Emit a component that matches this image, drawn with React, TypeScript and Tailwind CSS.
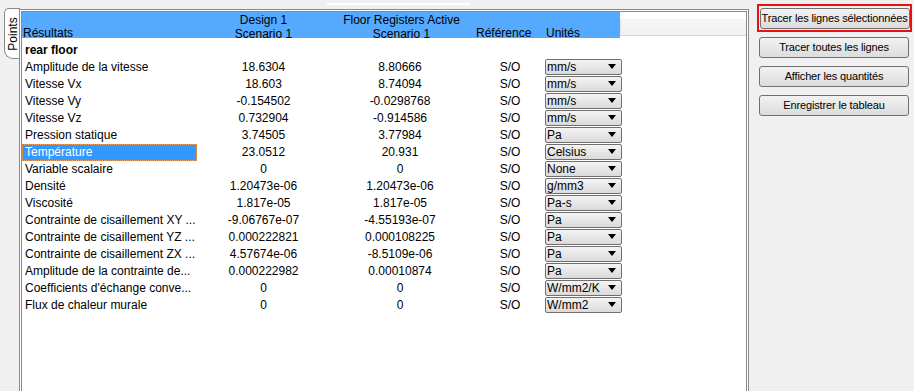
import React from "react";

const rows: [string, string, string, string][] = [
  ["Amplitude de la vitesse", "18.6304", "8.80666", "mm/s"],
  ["Vitesse Vx", "18.603", "8.74094", "mm/s"],
  ["Vitesse Vy", "-0.154502", "-0.0298768", "mm/s"],
  ["Vitesse Vz", "0.732904", "-0.914586", "mm/s"],
  ["Pression statique", "3.74505", "3.77984", "Pa"],
  ["Température", "23.0512", "20.931", "Celsius"],
  ["Variable scalaire", "0", "0", "None"],
  ["Densité", "1.20473e-06", "1.20473e-06", "g/mm3"],
  ["Viscosité", "1.817e-05", "1.817e-05", "Pa-s"],
  ["Contrainte de cisaillement XY ...", "-9.06767e-07", "-4.55193e-07", "Pa"],
  ["Contrainte de cisaillement YZ ...", "0.000222821", "0.000108225", "Pa"],
  ["Contrainte de cisaillement ZX ...", "4.57674e-06", "-8.5109e-06", "Pa"],
  ["Amplitude de la contrainte de...", "0.000222982", "0.00010874", "Pa"],
  ["Coefficients d'échange conve...", "0", "0", "W/mm2/K"],
  ["Flux de chaleur murale", "0", "0", "W/mm2"],
];

function Select({ value }: { value: string }) {
  return (
    <div className="h-[16px] w-[77px] border border-[#707070] rounded-[2px] bg-gradient-to-b from-[#f4f4f4] to-[#dadada] flex items-center justify-between pl-[1px] pr-[5px] leading-[14px]">
      <span className="whitespace-nowrap">{value}</span>
      <svg width="8" height="5" viewBox="0 0 8 5" className="shrink-0">
        <path d="M0 0 L8 0 L4 5 Z" fill="#000" />
      </svg>
    </div>
  );
}

function Button({ label }: { label: string }) {
  return (
    <div className="h-[21px] w-[150px] border border-[#707070] rounded-[3px] bg-gradient-to-b from-[#f2f2f2] to-[#dcdcdc] flex items-center justify-center whitespace-nowrap text-[11px] tracking-[-0.15px]">
      {label}
    </div>
  );
}

export default function App() {
  return (
    <div
      className="w-[914px] h-[391px] bg-[#f0f0f0] flex overflow-hidden text-[12px] text-black"
      style={{ fontFamily: '"Liberation Sans", Arial, sans-serif' }}
    >
      {/* Tab */}
      <div className="w-[19px] shrink-0 pt-[8px] pl-[4px]">
        <div className="w-[16px] h-[51px] bg-white border-l border-t border-b border-[#898989] rounded-tl-[5px] rounded-bl-[9px] flex items-center justify-center">
          <span className="-rotate-90 whitespace-nowrap leading-[12px]">Points</span>
        </div>
      </div>

      {/* Main panel */}
      <div className="w-[730px] shrink-0 flex flex-col">
        <div className="h-[9px] pt-[3px]">
          <div className="ml-[308px] w-[143px] h-[2px] bg-white" />
        </div>
        <div className="flex-1 border border-[#8a8a8a] bg-white p-[1px] border-b-0 pb-0">
          <div className="h-full border border-[#8a8a8a] border-b-0 bg-white">
            {/* header */}
            <div className="flex h-[26px]">
              <div className="w-[598px] bg-[#55aaff] grid grid-cols-[175px_133px_140px_75px_75px] leading-[14px] pt-[1px]">
                <div className="self-end pl-[1px] pb-[1px]">Résultats</div>
                <div className="text-center">
                  <div>Design 1</div>
                  <div>Scenario 1</div>
                </div>
                <div className="text-center pl-[3px]">
                  <div>Floor Registers Active</div>
                  <div>Scenario 1</div>
                </div>
                <div className="self-end pl-[6px] pb-[1px]">Référence</div>
                <div className="self-end pl-[1px] pb-[1px]">Unités</div>
              </div>
              <div className="flex-1 flex flex-col">
                <div className="h-[7px]" />
                <div className="h-[17px] bg-gradient-to-b from-[#f7f7f8] to-[#f0f0f2] border-b border-[#d5d5d5] border-l border-l-[#e6e6e6]" />
              </div>
            </div>

            {/* rows */}
            <div className="pt-[3px]">
              <div className="h-[17px] flex items-center pl-[3px] font-bold">rear floor</div>
              {rows.map(([label, v1, v2, unit]) => {
                const sel = label === "Température";
                return (
                  <div
                    key={label}
                    className="h-[17px] grid grid-cols-[175px_133px_140px_75px_77px] items-center"
                  >
                    <div
                      className={
                        sel
                          ? "h-[17px] bg-[#3399ff] text-white pl-[2px] flex items-center border border-dotted border-[#f0a060] whitespace-nowrap"
                          : "pl-[3px] whitespace-nowrap overflow-hidden"
                      }
                    >
                      {label}
                    </div>
                    <div className="text-center">{v1}</div>
                    <div className="text-center">{v2}</div>
                    <div className="text-center pl-[5px]">S/O</div>
                    <div className="flex items-start h-[17px]">
                      <Select value={unit} />
                    </div>
                  </div>
                );
              })}
            </div>
          </div>
        </div>
      </div>

      {/* Right buttons */}
      <div className="flex-1 pl-[8px] pt-[4px] flex flex-col">
        <div className="w-[155px] h-[28px] border-2 border-[#e81010] flex items-center justify-center">
          <Button label="Tracer les lignes sélectionnées" />
        </div>
        <div className="flex flex-col gap-[8px] pt-[5px] pl-[2px]">
          <Button label="Tracer toutes les lignes" />
          <Button label="Afficher les quantités" />
          <Button label="Enregistrer le tableau" />
        </div>
      </div>
    </div>
  );
}
